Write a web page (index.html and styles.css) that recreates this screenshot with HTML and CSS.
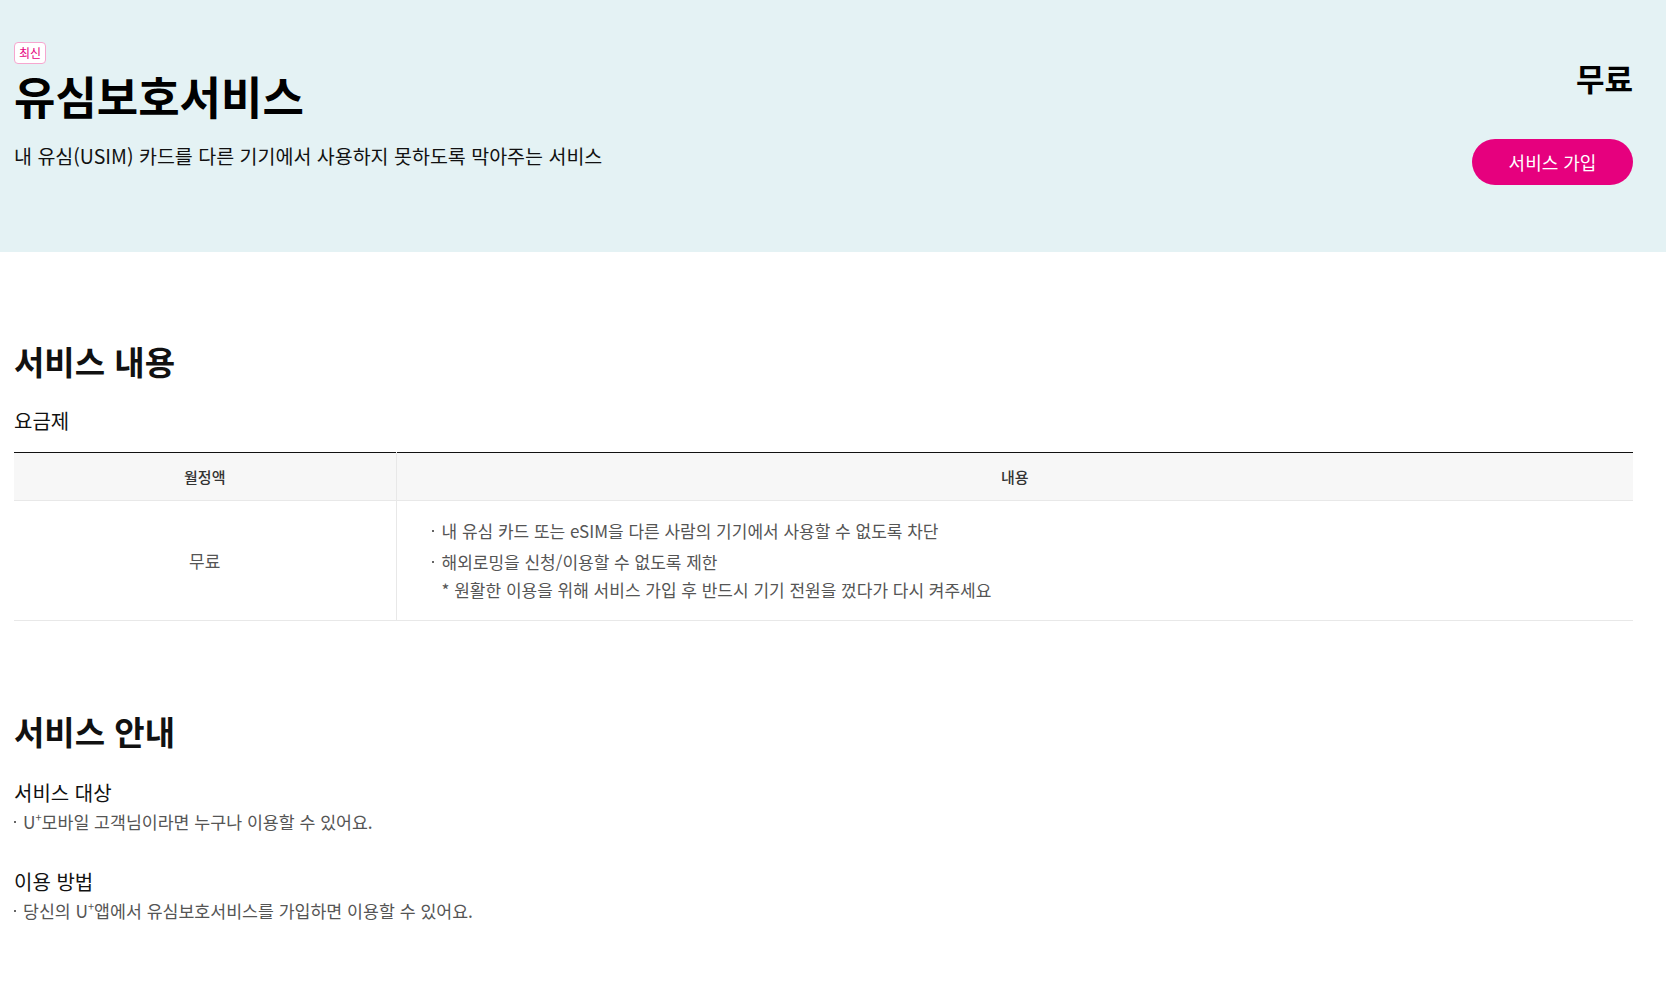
FILE: index.html
```html
<!DOCTYPE html>
<html lang="ko">
<head>
<meta charset="utf-8">
<title>유심보호서비스</title>
<link rel="stylesheet" href="styles.css">
</head>
<body>
<header class="hero">
  <div class="hero-main">
    <span class="badge">최신</span>
    <h1 class="hero-title">유심보호서비스</h1>
    <p class="hero-desc">내 유심(USIM) 카드를 다른 기기에서 사용하지 못하도록 막아주는 서비스</p>
  </div>
  <div class="hero-side">
    <div class="price">무료</div>
    <button class="join-btn" type="button">서비스 가입</button>
  </div>
</header>

<main class="content">
  <section class="section section-detail">
    <h2 class="section-title">서비스 내용</h2>
    <h3 class="sub-title">요금제</h3>
    <table class="plan-table">
      <thead>
        <tr>
          <th class="col-price">월정액</th>
          <th>내용</th>
        </tr>
      </thead>
      <tbody>
        <tr>
          <td class="cell-price">무료</td>
          <td class="cell-desc">
            <ul class="dot-list">
              <li>내 유심 카드 또는 eSIM을 다른 사람의 기기에서 사용할 수 없도록 차단</li>
              <li>해외로밍을 신청/이용할 수 없도록 제한<br>* 원활한 이용을 위해 서비스 가입 후 반드시 기기 전원을 껐다가 다시 켜주세요</li>
            </ul>
          </td>
        </tr>
      </tbody>
    </table>
  </section>

  <section class="section section-guide">
    <h2 class="section-title">서비스 안내</h2>
    <h3 class="sub-title guide-first">서비스 대상</h3>
    <ul class="dot-list guide-list">
      <li>U<sup class="plus">+</sup>모바일 고객님이라면 누구나 이용할 수 있어요.</li>
    </ul>
    <h3 class="sub-title guide-next">이용 방법</h3>
    <ul class="dot-list guide-list">
      <li>당신의 U<sup class="plus">+</sup>앱에서 유심보호서비스를 가입하면 이용할 수 있어요.</li>
    </ul>
  </section>
</main>
</body>
</html>
```

FILE: styles.css
```css
* {
  box-sizing: border-box;
}

html, body {
  margin: 0;
  padding: 0;
  background: #ffffff;
}

body {
  font-family: "Noto Sans CJK KR", "Noto Sans", sans-serif;
  color: #111111;
}

.hero {
  height: 252px;
  background: #e4f2f4;
  display: flex;
  justify-content: space-between;
  padding: 42px 33px 0 14px;
}

.hero-main {
  display: flex;
  flex-direction: column;
  align-items: flex-start;
}

.badge {
  display: inline-block;
  height: 22px;
  line-height: 19px;
  padding: 0 4px;
  font-size: 12px;
  color: #e6007e;
  background: #ffffff;
  border: 1px solid #f6a6cf;
  border-radius: 4px;
}

.hero-title {
  margin: 4px 0 0;
  font-size: 45px;
  line-height: 56px;
  font-weight: 700;
  color: #000000;
}

.hero-desc {
  margin: 18px 0 0;
  font-size: 19.5px;
  line-height: 28px;
  color: #111111;
}

.hero-side {
  display: flex;
  flex-direction: column;
  align-items: flex-end;
}

.price {
  margin-top: 16px;
  font-size: 31px;
  line-height: 40px;
  font-weight: 700;
  color: #000000;
}

.join-btn {
  margin-top: 41px;
  width: 161px;
  height: 46px;
  border: 0;
  border-radius: 23px;
  background: #e6007e;
  color: #ffffff;
  font-family: inherit;
  font-size: 18px;
  cursor: pointer;
}

.content {
  padding: 0 33px 40px 14px;
}

.section-title {
  margin: 0;
  font-size: 33px;
  line-height: 44px;
  font-weight: 700;
  color: #111111;
}

.section-detail .section-title {
  margin-top: 87px;
}

.section-guide .section-title {
  margin-top: 88px;
}

.sub-title {
  margin: 25px 0 0;
  font-size: 20px;
  line-height: 26px;
  font-weight: 400;
  color: #111111;
}

.plan-table {
  width: 100%;
  margin-top: 18px;
  border-collapse: collapse;
  border-top: 1px solid #111111;
}

.plan-table th {
  height: 48px;
  padding: 0;
  background: #f7f7f7;
  font-size: 15px;
  font-weight: 500;
  color: #333333;
  border-bottom: 1px solid #e8e8e8;
}

.plan-table th.col-price {
  width: 382px;
  border-right: 1px solid #e8e8e8;
}

.plan-table td {
  border-bottom: 1px solid #e8e8e8;
  font-size: 17px;
  color: #555555;
}

.cell-price {
  text-align: center;
  vertical-align: middle;
  border-right: 1px solid #e8e8e8;
}

.cell-desc {
  padding: 16px 0 16px 34px;
}

.dot-list {
  list-style: none;
  margin: 0;
  padding: 0;
}

.dot-list li {
  position: relative;
  padding-left: 11px;
  font-size: 17px;
  line-height: 28px;
  color: #555555;
}

.dot-list li + li {
  margin-top: 3px;
}

.dot-list li::before {
  content: "";
  position: absolute;
  left: 1px;
  top: 13px;
  width: 2px;
  height: 2px;
  background: #666666;
}

.guide-first {
  margin-top: 27px;
}

.guide-next {
  margin-top: 35px;
}

.guide-list {
  margin-top: 4px;
}

.guide-list li {
  padding-left: 9px;
  font-size: 17.3px;
  line-height: 24px;
}

.guide-list li::before {
  left: 0;
  top: 11px;
}

.plus {
  font-size: 11px;
  vertical-align: top;
  line-height: 14px;
}
```
